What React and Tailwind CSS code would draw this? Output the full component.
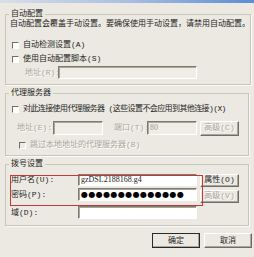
const cjk = "font-['Liberation_Mono','Noto_Sans_CJK_SC',monospace]";
const dim = "text-[#a9a69c] [text-shadow:1px_1px_0_#fff]";

function Check({ label, disabled, className = "" }) {
  return (
    <div className="flex h-[10px] items-center gap-[4px]">
      <span
        className={`h-[7px] w-[7px] shrink-0 border border-t-[#6f6d66] border-l-[#6f6d66] border-r-white border-b-white ${
          disabled ? "bg-[#eceae3]" : "bg-white"
        }`}
      />
      <span className={`leading-[10px] whitespace-nowrap ${disabled ? dim : ""} ${className}`}>{label}</span>
    </div>
  );
}

function Field({ className = "", white, children }) {
  return (
    <div
      className={`flex shrink-0 items-center border border-t-[#7d7a70] border-l-[#7d7a70] border-r-white border-b-white px-[2px] shadow-[inset_1px_1px_0_#a9a69b] ${
        white ? "bg-white" : "bg-[#efede6]"
      } ${className}`}
    >
      {children}
    </div>
  );
}

function Btn({ children, disabled, primary, className = "" }) {
  return (
    <div
      className={`flex shrink-0 items-center justify-center border ${
        primary ? "border-[#2a2a2a]" : "border-t-white border-l-white border-r-[#6f6d66] border-b-[#6f6d66]"
      } bg-[#ebe9e1] leading-[10px] whitespace-nowrap shadow-[inset_-1px_-1px_0_#a9a69b] ${
        disabled ? dim : "text-[#1e1e1e]"
      } ${className}`}
    >
      {children}
    </div>
  );
}

function Group({ title, className = "", children }) {
  return (
    <fieldset className={`border border-[#c9c6ba] shadow-[1px_1px_0_#fbfaf6] ${className}`}>
      <legend className="ml-[3px] px-[2px] leading-[10px]">{title}</legend>
      {children}
    </fieldset>
  );
}

export default function App() {
  return (
    <div className={`relative flex h-[257px] w-[254px] flex-col overflow-hidden bg-[#ebe9e1] text-[8px] text-[#1e1e1e] ${cjk}`}>
      <div className="h-[3px] bg-gradient-to-r from-[#d9dfe8] via-[#a9bfe0] to-[#5b8cd3]" />

      <div className="flex flex-col px-[5px] pt-[6px]">
        <Group title="自动配置" className="h-[76px]">
          <p className="pl-[4px] leading-[10px] whitespace-nowrap">
            自动配置会覆盖手动设置。要确保使用手动设置，请禁用自动配置。
          </p>
          <div className="mt-[11px] pl-[6px]">
            <Check label="自动检测设置(A)" />
          </div>
          <div className="mt-[4px] pl-[6px]">
            <Check label="使用自动配置脚本(S)" />
          </div>
          <div className="mt-[2px] flex h-[13px] items-center">
            <span className={`w-[52px] shrink-0 pl-[19px] whitespace-nowrap ${dim}`}>地址(R):</span>
            <Field className="h-[13px] w-[139px]" />
          </div>
        </Group>

        <Group title="代理服务器" className="mt-[3px] h-[68px]">
          <div className="mt-[6px] pl-[6px]">
            <Check className="tracking-[-0.6px]" label="对此连接使用代理服务器 (这些设置不会应用到其他连接)(X)" />
          </div>
          <div className="mt-[7px] flex h-[14px] items-center">
            <span className={`w-[47px] shrink-0 pl-[11px] whitespace-nowrap ${dim}`}>地址(E):</span>
            <Field className="h-[14px] w-[50px]" />
            <span className={`w-[44px] shrink-0 pl-[11px] whitespace-nowrap ${dim}`}>端口(T):</span>
            <Field className="h-[14px] w-[50px] font-['Liberation_Serif',serif] text-[#9c998f]">80</Field>
            <Btn disabled className="ml-[3px] h-[15px] w-[39px]">高级(C)</Btn>
          </div>
          <div className="mt-[5px] pl-[13px]">
            <Check disabled label="跳过本地地址的代理服务器(B)" />
          </div>
        </Group>

        <Group title="拨号设置" className="mt-[3px] h-[67px]">
          <div className="mt-[5px] flex h-[12px] items-center">
            <span className="w-[72px] shrink-0 pl-[5px] whitespace-nowrap">用户名(U):</span>
            <Field white className="h-[12px] w-[119px] font-['Liberation_Serif',serif] text-[8px] text-[#222]">
              gzDSL2188168.g4
            </Field>
            <Btn className="ml-[3px] h-[13px] w-[39px]">属性(O)</Btn>
          </div>
          <div className="mt-[2px] flex h-[13px] items-center">
            <span className="w-[72px] shrink-0 pl-[5px] whitespace-nowrap">密码(P):</span>
            <Field white className="h-[13px] w-[119px] font-['DejaVu_Sans',sans-serif] text-[8px] leading-[9px] tracking-[0.4px] text-black">
              <span className="whitespace-nowrap">●●●●●●●●●●●●●●</span>
            </Field>
            <Btn disabled className="ml-[3px] mt-[3px] h-[13px] w-[39px]">高级(V)</Btn>
          </div>
          <div className="mt-[5px] flex h-[13px] items-center">
            <span className="w-[72px] shrink-0 pl-[5px] whitespace-nowrap">域(D):</span>
            <Field white className="h-[13px] w-[119px]" />
          </div>
        </Group>
      </div>

      <div className="mt-[7px] flex justify-end gap-[4px] pr-[2px]">
        <Btn primary className="h-[15px] w-[48px]">确定</Btn>
        <Btn className="h-[15px] w-[48px]">取消</Btn>
      </div>

      <div className="pointer-events-none absolute left-[10px] top-[175px] h-[31px] w-[193px] border border-[#c0393b]" />
    </div>
  );
}
